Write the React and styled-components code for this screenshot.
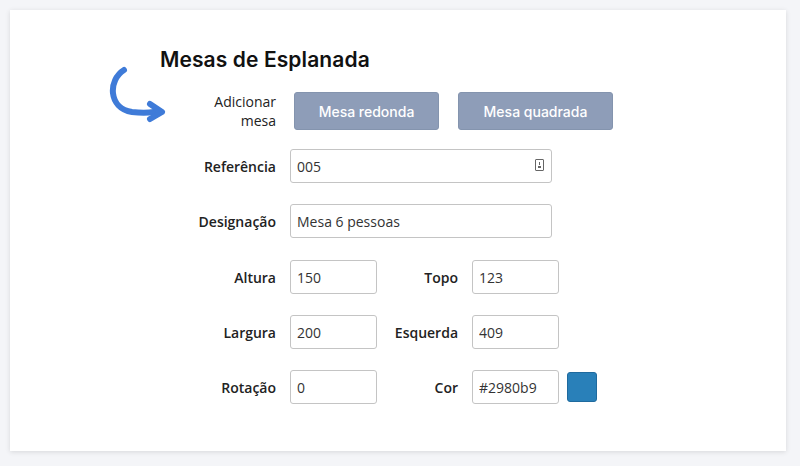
import styled, { createGlobalStyle } from "styled-components";

const Global = createGlobalStyle`
  body { margin: 0; background: #f4f5f8; font-family: "Open Sans", sans-serif; }
`;

const Page = styled.div`
  width: 800px;
  height: 466px;
  padding: 10px 14px 15px 10px;
  box-sizing: border-box;
  background: #f4f5f8;
`;

const Card = styled.div`
  position: relative;
  height: 100%;
  background: #fff;
  box-shadow: 0 1px 5px rgba(0, 0, 0, 0.12);
  padding: 37px 0 0 166px;
  box-sizing: border-box;
`;

const Title = styled.h1`
  margin: 0 0 20px -16px;
  font-family: Inter, sans-serif;
  font-weight: 600;
  font-size: 21px;
  color: #111;
  letter-spacing: 0.1px;
`;

const Row = styled.div`
  display: flex;
  align-items: center;
  height: ${p => p.h || 34}px;
  margin-bottom: ${p => p.mb ?? 21}px;
`;

const Label = styled.label`
  width: ${p => p.w || 100}px;
  text-align: right;
  font-size: 14px;
  font-weight: ${p => (p.light ? 400 : 600)};
  color: #222;
  margin-right: 14px;
  flex-shrink: 0;
`;

const Button = styled.button`
  height: 38px;
  width: ${p => p.w}px;
  margin-left: ${p => p.ml || 0}px;
  background: #8e9db8;
  border: 1px solid #8494ae;
  border-radius: 3px;
  color: #fff;
  font-family: Inter, sans-serif;
  font-size: 14px;
  font-weight: 500;
`;

const InputWrap = styled.div`
  position: relative;
  width: ${p => p.w}px;
  height: 34px;
`;

const Input = styled.input`
  width: 100%;
  height: 100%;
  box-sizing: border-box;
  border: 1px solid #c4c4c4;
  border-radius: 3px;
  padding: 0 6px;
  font-family: "Open Sans", sans-serif;
  font-size: 14px;
  color: #333;
  outline: none;
`;

const Badge = styled.span`
  position: absolute;
  right: 8px;
  top: 10px;
  width: 9px;
  height: 12px;
  border: 1px solid #666;
  border-radius: 1px;
  box-sizing: border-box;
  &::after {
    content: "";
    position: absolute;
    left: 2px; right: 2px; bottom: 2px;
    height: 2px;
    background: #666;
  }
  &::before {
    content: "";
    position: absolute;
    left: 3px; top: 2px;
    width: 1px; height: 3px;
    background: #666;
  }
`;

const Swatch = styled.div`
  width: 28px;
  height: 28px;
  margin-left: 8px;
  background: #2980b9;
  border: 1px solid #1f6a9e;
  border-radius: 3px;
`;

const Arrow = styled.svg`
  position: absolute;
  left: 96px;
  top: 56px;
`;

const Field = ({ label, value, w, icon, lw }) => (
  <>
    <Label w={lw}>{label}</Label>
    <InputWrap w={w}>
      <Input defaultValue={value} />
      {icon && <Badge />}
    </InputWrap>
  </>
);

export default function App() {
  return (
    <Page>
      <Global />
      <Card>
        <Arrow width="66" height="60" viewBox="0 0 66 60">
          <path d="M18 4 C2 14 2 42 26 46 C34 47 42 47 48 46" fill="none" stroke="#3f7bd8" strokeWidth="6" strokeLinecap="round" />
          <path d="M44 38 L56 46 L44 53" fill="none" stroke="#3f7bd8" strokeWidth="6" strokeLinecap="round" strokeLinejoin="round" />
        </Arrow>
        <Title>Mesas de Esplanada</Title>
        <Row h={38} mb={19}>
          <Label light style={{ marginRight: 18 }}>Adicionar mesa</Label>
          <Button w={145}>Mesa redonda</Button>
          <Button w={155} ml={19}>Mesa quadrada</Button>
        </Row>
        <Row>
          <Field label="Referência" value="005" w={262} icon />
        </Row>
        <Row mb={22}>
          <Field label="Designação" value="Mesa 6 pessoas" w={262} />
        </Row>
        <Row>
          <Field label="Altura" value="150" w={87} />
          <Field label="Topo" value="123" w={87} lw={81} />
        </Row>
        <Row>
          <Field label="Largura" value="200" w={87} />
          <Field label="Esquerda" value="409" w={87} lw={81} />
        </Row>
        <Row>
          <Field label="Rotação" value="0" w={87} />
          <Field label="Cor" value="#2980b9" w={87} lw={81} />
          <Swatch />
        </Row>
      </Card>
    </Page>
  );
}
